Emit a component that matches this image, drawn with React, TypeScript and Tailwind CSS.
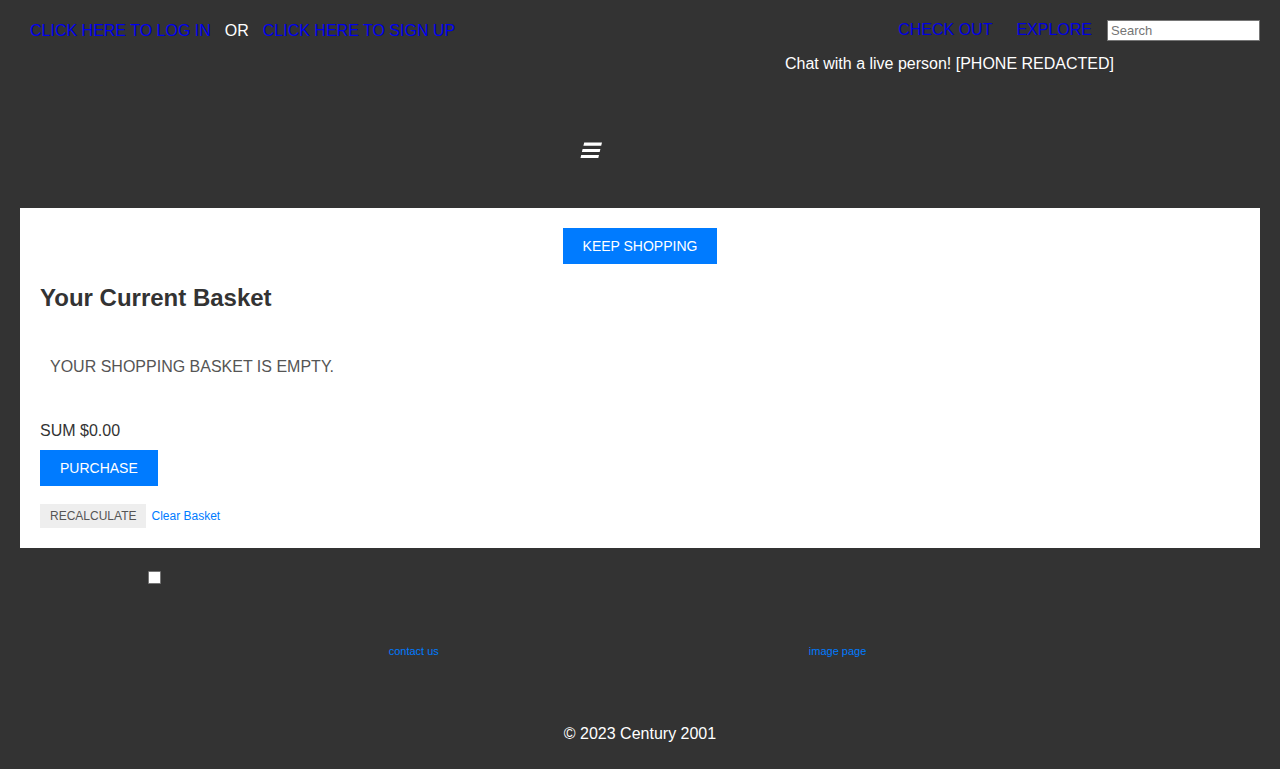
const navLink = "text-[#0000ee] uppercase";

function TopBar() {
  return (
    <header className="px-5 pt-5">
      <div className="flex items-center justify-between">
        <div className="flex items-center pl-[10px]">
          <a href="#login" className={navLink}>Click here to log in</a>
          <span className="mx-[14px]">OR</span>
          <a href="#signup" className={navLink}>Click here to sign up</a>
        </div>
        <nav className="flex items-start text-[#0000e0] uppercase">
          <a href="#checkout" className="pt-px">Check out</a>
          <a href="#explore" className="mr-[15px] ml-6 pt-px">Explore</a>
          <input
            type="search"
            aria-label="Search"
            placeholder="Search"
            className="h-[21px] w-[153px] border border-[#767676] bg-white px-[3px] text-[13px] text-black placeholder:text-[#757575]"
          />
        </nav>
      </div>
      <p className="mt-[14px] pr-[146px] text-right">Chat with a live person! [PHONE REDACTED]</p>
    </header>
  );
}

function MenuButton() {
  return (
    <div className="flex justify-center pt-[68px] pr-[98px] pb-[49px]">
      <button type="button" aria-label="Menu" className="block">
        <svg width="22" height="18" viewBox="0 0 22 18" fill="#fff" aria-hidden="true">
          <path d="M4.200 1.500h17.800l-.8 3.200h-17.800zM2.600 8h17.800l-.7 3h-17.800zM1.200 14h17.800l-.7 3h-17.800z" />
        </svg>
      </button>
    </div>
  );
}

function Basket() {
  return (
    <main className="mx-5 bg-white p-5 text-[#333]">
      <div className="flex justify-center">
        <button type="button" className="h-9 bg-[#007bff] px-5 text-sm text-white uppercase">Keep shopping</button>
      </div>
      <h2 className="mt-5 text-2xl leading-7 font-bold">Your Current Basket</h2>
      <p className="mt-[46px] pl-[10px] text-[#555] uppercase">Your shopping basket is empty.</p>
      <p className="mt-[46px]">SUM $0.00</p>
      <button type="button" className="mt-[10px] block h-9 bg-[#007bff] px-5 text-sm text-white uppercase">Purchase</button>
      <div className="mt-[18px] flex gap-[5px] text-xs">
        <button type="button" className="h-6 bg-[#eee] px-[10px] text-[#555] uppercase">Recalculate</button>
        <button type="button" className="h-6 text-[#007bff]">Clear Basket</button>
      </div>
    </main>
  );
}

function Footer() {
  return (
    <footer className="pt-[23px]">
      <input
        type="checkbox"
        aria-label="Select"
        className="ml-[148px] block size-[13px] appearance-none rounded-[1px] border border-[#767676] bg-white checked:bg-[#007bff]"
      />
      <nav className="mt-[61px] flex justify-center gap-[370px] pr-[25px] text-[11px] leading-[13px] text-[#007bff]">
        <a href="#contact">contact us</a>
        <a href="#images">image page</a>
      </nav>
      <p className="mt-[67px] pb-[26px] text-center">© 2023 Century 2001</p>
    </footer>
  );
}

export default function App() {
  return (
    <div className="min-h-screen bg-[#333] font-['Liberation_Sans',Arial,sans-serif] text-base leading-[18px] text-white">
      <TopBar />
      <MenuButton />
      <Basket />
      <Footer />
    </div>
  );
}
